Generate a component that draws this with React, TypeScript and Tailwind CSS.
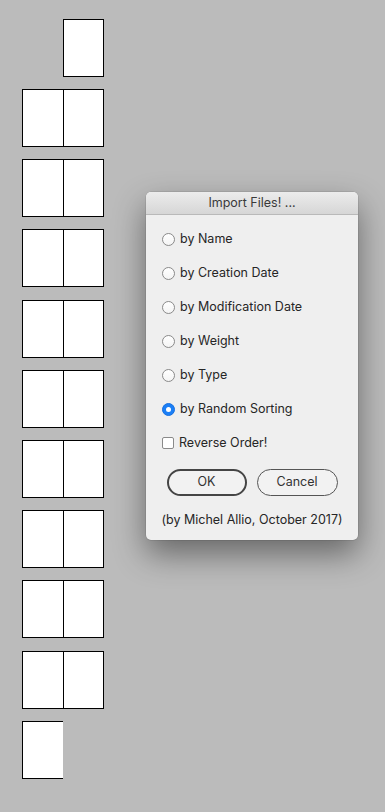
import React from "react";

const font = { fontFamily: '"Helvetica Neue", Inter, "Noto Sans", "Liberation Sans", sans-serif' };

function Spread({ extra }: { extra?: boolean }) {
  return (
    <div className={extra ? "mt-[13px] flex h-[58px] w-[82px]" : "mt-[12px] flex h-[58px] w-[82px]"}>
      <div className="h-full w-[42px] border border-black bg-white" />
      <div className="h-full w-[40px] border-y border-r border-black bg-white" />
    </div>
  );
}

function Radio({ checked, label }: { checked?: boolean; label: string }) {
  return (
    <div className="flex h-[34px] items-center">
      {checked ? (
        <div className="flex h-[13px] w-[13px] items-center justify-center rounded-full border border-[#1670e0] bg-[#1b7ff6]">
          <div className="h-[5px] w-[5px] rounded-full bg-white" />
        </div>
      ) : (
        <div className="h-[13px] w-[13px] rounded-full border border-[#8a8a8a] bg-gradient-to-b from-white to-[#f4f4f4]" />
      )}
      <span className="ml-[5px] text-[12.5px] text-[#262626]">{label}</span>
    </div>
  );
}

export default function App() {
  const labels = [
    "by Name",
    "by Creation Date",
    "by Modification Date",
    "by Weight",
    "by Type",
  ];
  return (
    <div className="relative h-[812px] w-[385px] overflow-hidden bg-[#bbbbbb]" style={font}>
      <div className="flex flex-col pl-[22px] pt-[19px]">
        <div className="ml-[41px] h-[58px] w-[41px] border border-black bg-white" />
        {Array.from({ length: 9 }).map((_, i) => (
          <Spread key={i} extra={i === 3 || i === 8} />
        ))}
        <div className="mt-[12px] h-[58px] w-[41px] border-y border-l border-black bg-white" />
      </div>

      <div className="absolute left-[146px] top-[192px] flex h-[348px] w-[212px] flex-col overflow-hidden rounded-[5px] bg-[#efefef] shadow-[0_14px_32px_rgba(0,0,0,0.45),0_0_0_0.5px_rgba(0,0,0,0.15)]">
        <div className="flex h-[23px] items-center justify-center border-b border-[#b9b9b9] bg-gradient-to-b from-[#ececec] to-[#d6d6d6] text-[12.5px] text-[#3a3a3a]">
          Import Files! ...
        </div>
        <div className="flex flex-col pl-[16px] pt-[7px]">
          {labels.map((l) => (
            <Radio key={l} label={l} />
          ))}
          <Radio checked label="by Random Sorting" />
          <div className="flex h-[34px] items-center">
            <div className="h-[12px] w-[12px] rounded-[2px] border border-[#8a8a8a] bg-white" />
            <span className="ml-[5px] text-[12.5px] text-[#262626]">Reverse Order!</span>
          </div>
        </div>
        <div className="mt-[9px] flex justify-center gap-[10px]">
          <div className="flex h-[27px] w-[80px] items-center justify-center rounded-full border-2 border-[#454545] bg-[#f2f2f2] text-[12.5px] text-[#333]">
            OK
          </div>
          <div className="flex h-[27px] w-[81px] items-center justify-center rounded-full border border-[#555] bg-[#f2f2f2] text-[12.5px] text-[#333]">
            Cancel
          </div>
        </div>
        <div className="mt-[15px] text-center text-[12.5px] text-[#262626]">
          (by Michel Allio, October 2017)
        </div>
      </div>
    </div>
  );
}
